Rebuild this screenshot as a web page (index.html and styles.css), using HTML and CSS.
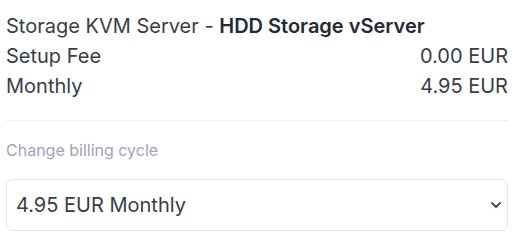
FILE: index.html
```html
<!DOCTYPE html>
<html lang="en">
<head>
    <meta charset="UTF-8">
    <meta name="viewport" content="width=device-width, initial-scale=1.0">
    <title>Order Summary</title>
    <link rel="stylesheet" href="styles.css">
</head>
<body>
    <div class="summary">
        <div class="product">Storage KVM Server - <strong>HDD Storage vServer</strong></div>
        <div class="row">
            <span>Setup Fee</span>
            <span>0.00 EUR</span>
        </div>
        <div class="row">
            <span>Monthly</span>
            <span>4.95 EUR</span>
        </div>

        <hr class="divider">

        <label for="billingcycle" class="cycle-label">Change billing cycle</label>
        <div class="select-wrap">
            <select id="billingcycle" name="billingcycle">
                <option value="monthly" selected>4.95 EUR Monthly</option>
            </select>
            <svg class="chevron" width="12" height="8" viewBox="0 0 12 8" aria-hidden="true">
                <path d="M1.5 1.5 L6 6 L10.5 1.5" fill="none" stroke="#4a4f5c" stroke-width="2"/>
            </svg>
        </div>
    </div>
</body>
</html>
```

FILE: styles.css
```css
body {
    font-family: Inter, "Noto Sans", sans-serif;
    background-color: #fff;
    color: #3a3d44;
    margin: 0;
    padding: 0;
}

.summary {
    width: 502px;
    margin-left: 6px;
    padding-top: 11px;
}

.product,
.row {
    font-size: 20px;
    line-height: 30px;
}

.product strong {
    font-weight: 600;
    color: #262a33;
}

.row {
    display: flex;
    justify-content: space-between;
}

.divider {
    border: none;
    border-top: 1px solid #eceef1;
    margin: 19px 0 0;
}

.cycle-label {
    display: block;
    margin-top: 18px;
    font-size: 16px;
    line-height: 22px;
    color: #a0a4b6;
}

.select-wrap {
    position: relative;
    margin-top: 18px;
}

select {
    width: 100%;
    height: 52px;
    padding: 0 40px 0 9px;
    border: 1px solid #e4e6ea;
    border-radius: 7px;
    background-color: #fff;
    font-family: inherit;
    font-size: 20px;
    color: #3a3d44;
    appearance: none;
    -webkit-appearance: none;
}

.chevron {
    position: absolute;
    right: 6px;
    top: 22px;
}
```
